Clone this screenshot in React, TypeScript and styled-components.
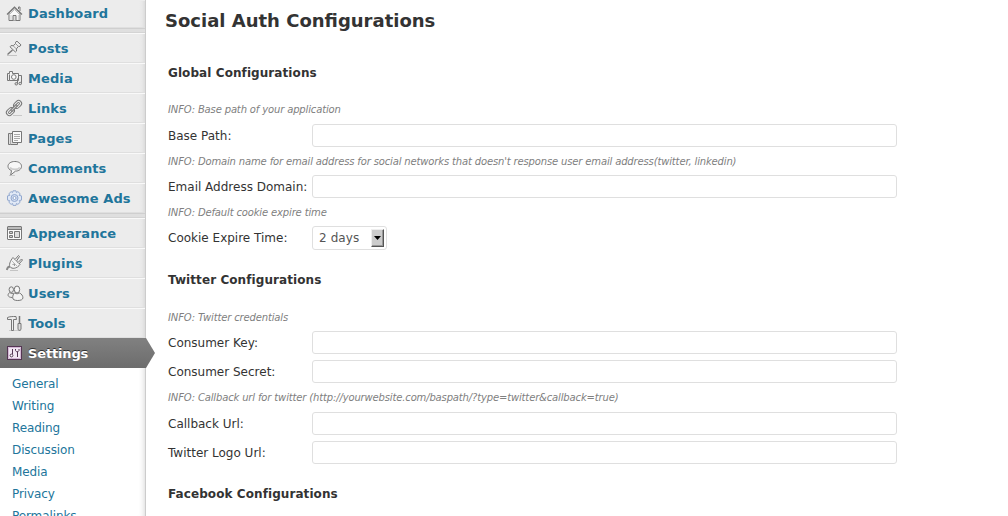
import React from "react";
import styled, { createGlobalStyle, css } from "styled-components";

const GlobalStyle = createGlobalStyle`
  * { box-sizing: border-box; }
  html, body { margin: 0; height: 516px; overflow: hidden; background: #fff; }
  body { font-family: "DejaVu Sans", Verdana, sans-serif; font-size: 12px; color: #333; }
`;

const Page = styled.div`
  display: flex;
  height: 516px;
  overflow: hidden;
`;

const Sidebar = styled.nav`
  width: 146px;
  flex: none;
  height: 516px;
  border-right: 1px solid #ccc;
  box-shadow: inset -6px 0 6px -6px rgba(0, 0, 0, 0.2);
`;

const MenuRow = styled.a<{ $active?: boolean; $short?: boolean }>`
  position: relative;
  display: flex;
  align-items: center;
  height: ${(p) => (p.$short ? 28 : 30)}px;
  padding: ${(p) => (p.$short ? "0 0 1px 6px" : "1px 0 0 6px")};
  gap: 4px;
  font-size: 13px;
  letter-spacing: 0.1px;
  font-weight: bold;
  color: #21759b;
  border-top: 1px solid ${(p) => (p.$short ? "#ececec" : "#f9f9f9")};
  border-bottom: 1px solid #dfdfdf;
  background: linear-gradient(to left, #dcdcdc 0, #e8e8e8 3px, #ececec 6px);
  ${(p) =>
    p.$active &&
    css`
      width: 146px;
      color: #fff;
      letter-spacing: -0.15px;
      text-shadow: 0 -1px 0 #333;
      border-color: #808080 transparent #6d6d6d;
      background: linear-gradient(#808080, #6d6d6d);
    `}
`;

const Arrow = styled.svg`
  position: absolute;
  left: 146px;
  top: -1px;
`;

const Separator = styled.div`
  height: 5px;
  border-top: 1px solid #cfcfcf;
  border-bottom: 1px solid #d4d4d4;
  background: #dfdfdf;
`;

const Submenu = styled.ul`
  list-style: none;
  margin: 0;
  padding: 5px 0 0 12px;
`;

const SubItem = styled.li`
  height: 22px;
  line-height: 22px;
  letter-spacing: -0.1px;
  color: #21759b;
`;

const Content = styled.main`
  flex: 1;
  padding: 9px 0 0 19px;
`;

const Title = styled.h2`
  margin: 0;
  height: 24px;
  font-size: 18px;
  line-height: 24px;
`;

const Form = styled.form`
  width: 732px;
  padding: 32px 0 0 3px;
`;

const Section = styled.section`
  margin-bottom: 22px;
`;

const Heading = styled.h3<{ $gap?: number }>`
  margin: 0 0 ${(p) => p.$gap ?? 21}px;
  height: 16px;
  line-height: 16px;
  font-size: 12px;
  letter-spacing: 0.08px;
`;

const Info = styled.p<{ $gap: number }>`
  margin: 0 0 ${(p) => p.$gap}px;
  height: 16px;
  line-height: 16px;
  font-size: 10px;
  font-style: italic;
  letter-spacing: -0.148px;
  white-space: nowrap;
  color: #808080;
`;

const Field = styled.label<{ $after: number }>`
  display: flex;
  align-items: center;
  height: 23px;
  margin-bottom: ${(p) => p.$after}px;
`;

const Label = styled.span`
  width: 144px;
  white-space: nowrap;
`;

const TextBox = styled.input`
  width: 585px;
  height: 23px;
  padding: 2px 4px;
  border: 1px solid #dfdfdf;
  border-radius: 3px;
  outline: none;
  background: #fff;
  font: inherit;
`;

const SelectBox = styled.span`
  display: flex;
  align-items: center;
  justify-content: space-between;
  width: 75px;
  height: 24px;
  padding: 0 2px 0 6px;
  border: 1px solid #dfdfdf;
  border-radius: 3px;
  letter-spacing: 0.1px;
  color: #555;
`;

const SelectButton = styled.span`
  display: flex;
  align-items: center;
  justify-content: center;
  width: 13px;
  height: 18px;
  background: #ccc;
  border: 1px solid;
  border-color: #eee #555 #555 #eee;
  box-shadow: inset -1px -1px 0 #999;
`;

const IconBox = styled.svg`
  flex: none;
  overflow: visible;
  fill: none;
  stroke: #777;
  stroke-width: 1;
`;

const icons: Record<string, React.ReactNode> = {
  Dashboard: (
    <>
      <path d="M3 8v7.5h11V8L8.5 3z" fill="#fafafa" />
      <path d="M12.5 4V2H14v4" />
      <path d="M1 9.5 8.5 2 16 9.5" strokeWidth="1.2" />
      <path d="m3 10 5.5-5.5L14 10" stroke="#bbb" />
      <path d="M7 15.5v-5h3v5" fill="#ddd" />
      <path d="M5 10v5M12.3 10v5" stroke="#ccc" />
    </>
  ),
  Posts: (
    <>
      <path d="M1 15.5h10" stroke="#c4c4c4" />
      <path d="M6.5 10l-5 4.5" strokeWidth="1.4" />
      <path d="M9.5 2.2 11 1.2l4 3.7-1 1.4-1.6.1-2.1 2.6.3 2-1.2 1L4 6.8l1-1.2 2.2.1 2.3-2z" fill="#eee" />
      <path d="m9.6 3.7 3 2.8M7.2 5.8l3 3" stroke="#999" />
    </>
  ),
  Media: (
    <>
      <path d="M1.5 3.5h2v-2h3v2h6v7h-9v-6" fill="#f4f4f4" />
      <path d="M1.5 3.5v7h2" />
      <circle cx="7.8" cy="7" r="2.3" fill="#fff" />
      <path d="M11.5 13.5v-5M15.5 5.5v8M12.5 5.5h3" />
      <ellipse cx="10.300" cy="13.800" rx="1.300" ry="1.200" fill="#ddd" />
      <ellipse cx="14.200" cy="13.500" rx="1.300" ry="1.200" fill="#ddd" />
    </>
  ),
  Links: (
    <>
      <path d="M7 15.5h9" stroke="#c8c8c8" />
      <g transform="rotate(-45 8 8)" fill="#eee">
        <rect x="-1.5" y="5" width="8.8" height="6" rx="3" />
        <rect x=".7" y="7" width="4.4" height="2" rx="1" fill="#fff" />
        <rect x="8.7" y="5" width="8.8" height="6" rx="3" />
        <rect x="10.9" y="7" width="4.4" height="2" rx="1" fill="#fff" />
        <rect x="4" y="7" width="8" height="2" rx="1" fill="#ccc" />
      </g>
    </>
  ),
  Pages: (
    <>
      <path d="M6 3.5H2.5v11h9V12" fill="#ddd" />
      <path d="M4.5 3.5v11" stroke="#aaa" />
      <path d="M6.5 1.5h9v11h-9z" fill="#fafafa" />
      <path d="M8 4.5h6M8 6.5h6M8 8.5h6M8 10.5h4" stroke="#aaa" />
    </>
  ),
  Comments: (
    <>
      <path d="M3 15.5h6" stroke="#ccc" />
      <path d="M8.8 1.5c4 0 6.7 2 6.7 4.8s-2.7 4.8-6 4.8L4.7 15l.8-4.4C3.3 9.7 2 8.2 2 6.3c0-2.8 2.8-4.8 6.8-4.8z" fill="#f7f7f7" />
      <path d="M4 7.5c2 2.5 8 2.5 9.8 0" stroke="#ccc" strokeWidth="1.8" />
    </>
  ),
  "Awesome Ads": (
    <g stroke="#93a9cf">
      <path d="M7 .8h3l.4 1.7 1.5-.9 2.300 2.200-1 1.600 2.300.5v4.200l-2.200.5.9 1.600-2.300 2.200-1.500-.9-.4 1.900H7l-.4-1.900-1.500.9-2.300-2.200.9-1.600-2.200-.5V5.900l2.300-.5-1-1.600 2.300-2.200 1.500.9z" fill="#e1e9f6" />
      <circle cx="8.500" cy="8" r="3.500" fill="#d0dbef" />
      <circle cx="8.500" cy="8" r="1.500" fill="#fff" />
    </g>
  ),
  Appearance: (
    <>
      <rect x="1.5" y="1.5" width="14" height="13" rx=".5" fill="#fafafa" />
      <path d="M2 3h13" strokeWidth="2" stroke="#bbb" />
      <path d="M1.5 4.5h14" />
      <path d="M3.5 6.5h3v2h-3zM3.5 10.5h3v2h-3z" fill="#ccc" />
      <path d="M8.5 6.5h5v6h-5z" fill="#ddd" />
    </>
  ),
  Plugins: (
    <>
      <path d="M4 15.5h8" stroke="#c4c4c4" />
      <path d="M.8 15c.5-3 1.700-3.500 3.500-3.500" strokeWidth="1.8" stroke="#888" />
      <path d="m7 2.500 7 7c-2.200 3-6.300 5-9.200 3S4.500 5.500 7 2.500z" fill="#f4f4f4" />
      <path d="m9 4.500 3.500-4 1 1-3 4.500M12 7.500l3.500-3.500 1 1L13 9" fill="#eee" />
      <path d="m6 6 6 6" stroke="#bbb" />
      <path d="m6.500 9.500 2-.5v2" stroke="#999" />
    </>
  ),
  Users: (
    <>
      <ellipse cx="5.3" cy="4.6" rx="2.2" ry="2.8" fill="#eee" />
      <path d="M6.5 12.5C1 12.5 1.3 9 3.7 7.6c1.5 1 3.3.8 4.3.8" fill="#eee" />
      <ellipse cx="11" cy="4.5" rx="2.7" ry="3.5" fill="#f7f7f7" />
      <path d="M8.7 8c1.5 1 3.5 1 4.7 0 2.3.8 3.5 3 3.5 4.8 0 1.7-2 2.7-5.2 2.7s-5-1-5-2.700c0-2 .5-4 2-4.800z" fill="#f4f4f4" />
    </>
  ),
  Tools: (
    <>
      <path d="M3 15.5h12" stroke="#ccc" />
      <path d="M1.5 4.5v-2c2-1 5-1 8.500-1l.5 3h-3v11h-2v-11z" fill="#eee" />
      <path d="M13.5 1v7" strokeWidth="1.5" />
      <path d="M12 8.5h3v6l-1 .8h-1l-1-.8z" fill="#ddd" />
    </>
  ),
  Settings: (
    <g stroke="#543653">
      <rect x="1.5" y="1.5" width="14" height="13" fill="#f3e8f4" />
      <path d="M2.5 2.5h12v11h-12z" stroke="#d5b8d6" />
      <path d="M6.5 4v5" />
      <circle cx="5.5" cy="10.5" r="1.400" fill="#fff" />
      <path d="M9.5 4v1.500l1 1.200h1.500l1-1.200V4M11.500 7v5" />
    </g>
  ),
};

const Icon = ({ name }: { name: string }) => (
  <IconBox width="18" height="17" viewBox="0 0 18 17">
    {icons[name]}
  </IconBox>
);

const Item = ({ name, active, short }: { name: string; active?: boolean; short?: boolean }) => (
  <MenuRow $active={active} $short={short}>
    <Icon name={name} />
    {name}
    {active && (
      <Arrow width="9" height="30" viewBox="0 0 9 30">
        <defs>
          <linearGradient id="arrowFill" x1="0" y1="0" x2="0" y2="1">
            <stop offset="0" stopColor="#808080" />
            <stop offset="1" stopColor="#6d6d6d" />
          </linearGradient>
        </defs>
        <path d="M0 0 9 15 0 30z" fill="url(#arrowFill)" />
      </Arrow>
    )}
  </MenuRow>
);

const TextField = ({ label, after = 6 }: { label: string; after?: number }) => (
  <Field $after={after}>
    <Label>{label}</Label>
    <TextBox type="text" />
  </Field>
);

const App = () => (
  <>
    <GlobalStyle />
    <Page>
      <Sidebar>
        <Item name="Dashboard" short />
        <Separator />
        {["Posts", "Media", "Links", "Pages", "Comments", "Awesome Ads"].map((n) => (
          <Item key={n} name={n} />
        ))}
        <Separator />
        {["Appearance", "Plugins", "Users", "Tools"].map((n) => (
          <Item key={n} name={n} />
        ))}
        <Item name="Settings" active />
        <Submenu>
          {["General", "Writing", "Reading", "Discussion", "Media", "Privacy", "Permalinks"].map((n) => (
            <SubItem key={n}>{n}</SubItem>
          ))}
        </Submenu>
      </Sidebar>
      <Content>
        <Title>Social Auth Configurations</Title>
        <Form>
          <Section>
            <Heading>Global Configurations</Heading>
            <Info $gap={6}>INFO: Base path of your application</Info>
            <TextField label="Base Path:" after={7} />
            <Info $gap={5}>
              INFO: Domain name for email address for social networks that doesn't response user email address(twitter,
              linkedin)
            </Info>
            <TextField label="Email Address Domain:" after={7} />
            <Info $gap={5}>INFO: Default cookie expire time</Info>
            <Field as="div" $after={23}>
              <Label>Cookie Expire Time:</Label>
              <SelectBox>
                2 days
                <SelectButton>
                  <svg width="7" height="4" viewBox="0 0 7 4">
                    <path d="M0 0h7L3.5 4z" fill="#000" />
                  </svg>
                </SelectButton>
              </SelectBox>
            </Field>
          </Section>
          <Section>
            <Heading $gap={22}>Twitter Configurations</Heading>
            <Info $gap={5}>INFO: Twitter credentials</Info>
            <TextField label="Consumer Key:" />
            <TextField label="Consumer Secret:" after={7} />
            <Info $gap={6}>INFO: Callback url for twitter (http://yourwebsite.com/baspath/?type=twitter&callback=true)</Info>
            <TextField label="Callback Url:" />
            <TextField label="Twitter Logo Url:" after={0} />
          </Section>
          <Section>
            <Heading>Facebook Configurations</Heading>
          </Section>
        </Form>
      </Content>
    </Page>
  </>
);

export default App;
